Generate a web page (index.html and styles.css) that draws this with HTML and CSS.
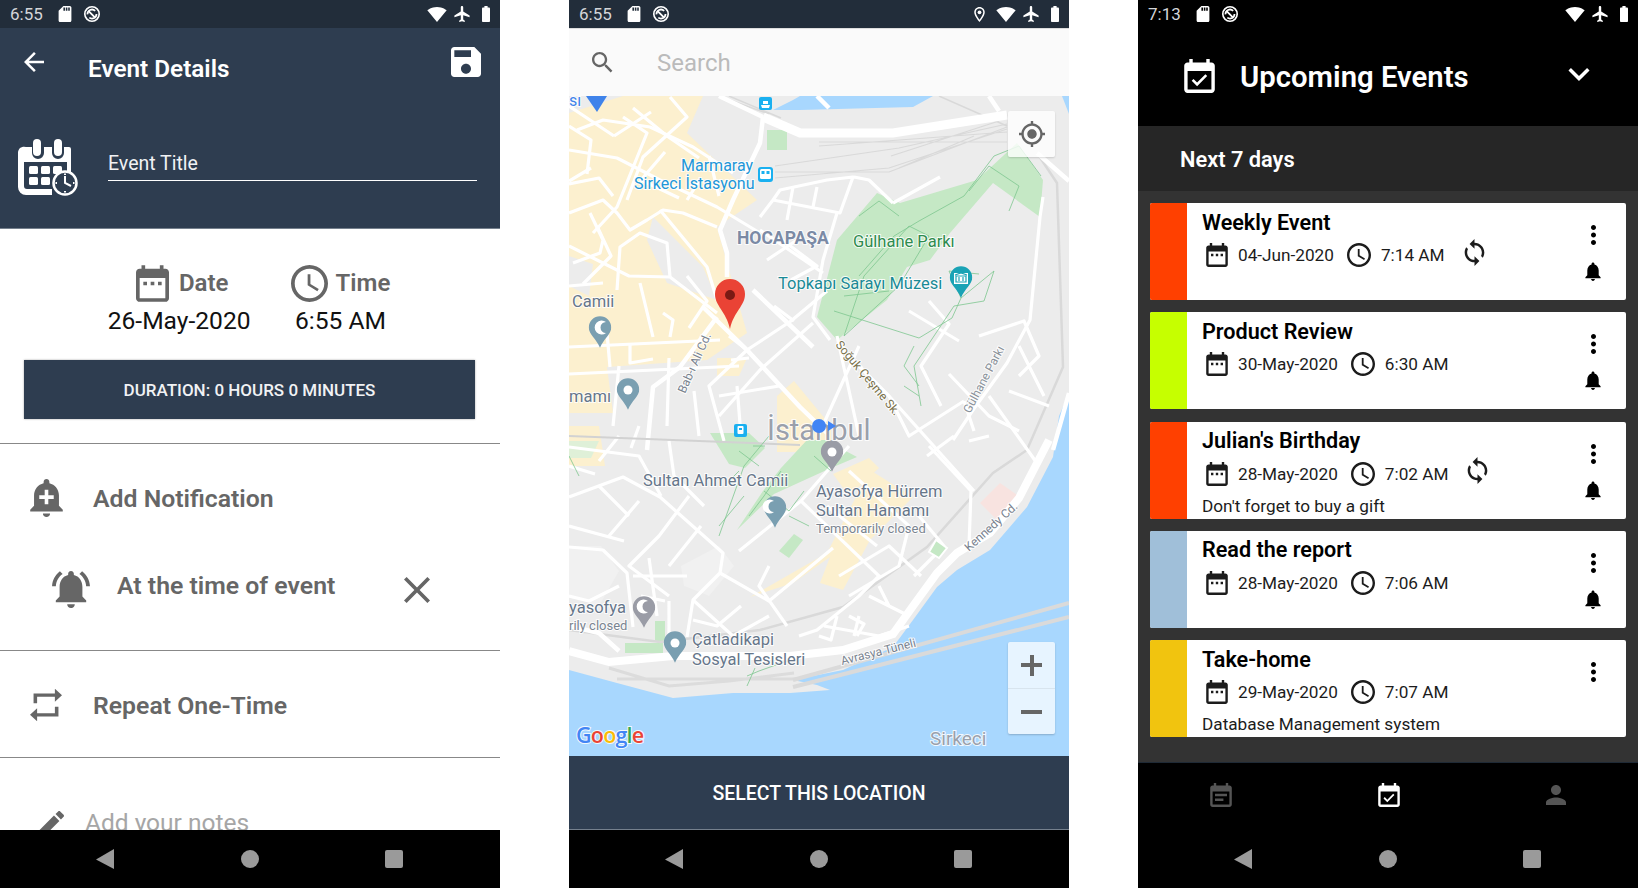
FILE: index.html
```html
<!DOCTYPE html>
<html lang="en">
<head>
    <meta charset="UTF-8">
    <title>Event app screens</title>
    <link rel="stylesheet" href="styles.css">
</head>
<body>

<svg class="sprite" width="0" height="0">
    <symbol id="i-back" viewBox="4 4 16 16"><path d="M20 11H7.83l5.59-5.59L12 4l-8 8 8 8 1.41-1.41L7.83 13H20v-2z"/></symbol>
    <symbol id="i-save" viewBox="3 3 18 18"><path d="M17 3H5c-1.11 0-2 .9-2 2v14c0 1.1.89 2 2 2h14c1.1 0 2-.9 2-2V7l-4-4zm-5 16c-1.66 0-3-1.34-3-3s1.34-3 3-3 3 1.34 3 3-1.34 3-3 3zm3-10H5V5h10v4z"/></symbol>
    <symbol id="i-date" viewBox="3 2 18 20"><path d="M9 11H7v2h2v-2zm4 0h-2v2h2v-2zm4 0h-2v2h2v-2zm2-7h-1V2h-2v2H8V2H6v2H5c-1.11 0-1.99.9-1.99 2L3 20c0 1.1.89 2 2 2h14c1.1 0 2-.9 2-2V6c0-1.1-.9-2-2-2zm0 16H5V9h14v11z"/></symbol>
    <symbol id="i-clock" viewBox="2 2 20 20"><path d="M11.99 2C6.47 2 2 6.48 2 12s4.47 10 9.99 10C17.52 22 22 17.52 22 12S17.52 2 11.99 2zM12 20c-4.42 0-8-3.58-8-8s3.58-8 8-8 8 3.58 8 8-3.58 8-8 8zm.5-13H11v6l5.25 3.15.75-1.23-4.5-2.67z"/></symbol>
    <symbol id="i-bell" viewBox="4 2 16 20"><path d="M12 22c1.1 0 2-.9 2-2h-4c0 1.1.89 2 2 2zm6-6v-5c0-3.07-1.64-5.64-4.5-6.32V4c0-.83-.67-1.5-1.5-1.5s-1.5.67-1.5 1.5v.68C7.63 5.36 6 7.92 6 11v5l-2 2v1h16v-1l-2-2z"/></symbol>
    <symbol id="i-add-alert" viewBox="3 2 18 21"><path d="M10.01 21.01c0 1.1.89 1.99 1.99 1.99s1.99-.89 1.99-1.99h-3.98zm8.87-4.19V11c0-3.25-2.25-5.97-5.29-6.69v-.72C13.59 2.71 12.88 2 12 2s-1.59.71-1.59 1.59v.72C7.37 5.03 5.12 7.75 5.12 11v5.82L3 18.94V20h18v-1.06l-2.12-2.12zM16 13.01h-3v3h-2v-3H8V11h3V8h2v3h3v2.01z"/></symbol>
    <symbol id="i-bell-active" viewBox="2 2 20 20"><path d="M7.58 4.08L6.15 2.65C3.75 4.48 2.17 7.3 2.03 10.5h2c.15-2.65 1.51-4.97 3.55-6.42zm12.39 6.42h2c-.15-3.2-1.73-6.02-4.12-7.85l-1.42 1.43c2.02 1.45 3.39 3.77 3.54 6.42zM18 11c0-3.07-1.64-5.64-4.5-6.32V4c0-.83-.67-1.5-1.5-1.5s-1.5.67-1.5 1.5v.68C7.63 5.36 6 7.92 6 11v5l-2 2v1h16v-1l-2-2v-5zm-6 11c.14 0 .27-.01.4-.04.65-.14 1.18-.58 1.44-1.18.1-.24.15-.5.15-.78h-4c.01 1.1.9 2 2.01 2z"/></symbol>
    <symbol id="i-close" viewBox="5 5 14 14"><path d="M19 6.41L17.59 5 12 10.59 6.41 5 5 6.41 10.59 12 5 17.59 6.41 19 12 13.41 17.59 19 19 17.59 13.41 12z"/></symbol>
    <symbol id="i-repeat" viewBox="3 1 18 22" preserveAspectRatio="none"><path d="M7 7h10v3l4-4-4-4v3H5v6h2V7zm10 10H7v-3l-4 4 4 4v-3h12v-6h-2v4z"/></symbol>
    <symbol id="i-edit" viewBox="3 3 18 18"><path d="M3 17.25V21h3.75L17.81 9.94l-3.75-3.75L3 17.25zM20.71 7.04c.39-.39.39-1.02 0-1.41l-2.34-2.34c-.39-.39-1.02-.39-1.41 0l-1.83 1.83 3.75 3.75 1.83-1.83z"/></symbol>
    <symbol id="i-search" viewBox="3 3 18 18"><path d="M15.5 14h-.79l-.28-.27C15.41 12.59 16 11.11 16 9.5 16 5.91 13.09 3 9.5 3S3 5.91 3 9.5 5.91 16 9.5 16c1.61 0 3.09-.59 4.23-1.57l.27.28v.79l5 4.99L20.49 19l-4.99-5zm-6 0C7.01 14 5 11.99 5 9.5S7.01 5 9.5 5 14 7.01 14 9.5 11.99 14 9.5 14z"/></symbol>
    <symbol id="i-event-check" viewBox="3 1 18 20"><path d="M16.53 11.06L15.47 10l-4.88 4.88-2.12-2.12-1.06 1.06L10.59 17l5.94-5.94zM19 3h-1V1h-2v2H8V1H6v2H5c-1.11 0-1.99.9-1.99 2L3 19c0 1.1.89 2 2 2h14c1.1 0 2-.9 2-2V5c0-1.1-.9-2-2-2zm0 16H5V8h14v11z"/></symbol>
    <symbol id="i-event-note" viewBox="3 1 18 20"><path d="M17 10H7v2h10v-2zm2-7h-1V1h-2v2H8V1H6v2H5c-1.11 0-1.99.9-1.99 2L3 19c0 1.1.89 2 2 2h14c1.1 0 2-.9 2-2V5c0-1.1-.9-2-2-2zm0 16H5V8h14v11zm-5-5H7v2h7v-2z"/></symbol>
    <symbol id="i-person" viewBox="4 4 16 16"><path d="M12 12c2.21 0 4-1.79 4-4s-1.79-4-4-4-4 1.79-4 4 1.79 4 4 4zm0 2c-2.67 0-8 1.34-8 4v2h16v-2c0-2.66-5.33-4-8-4z"/></symbol>
    <symbol id="i-chevron" viewBox="6 8.59 12 7.41"><path d="M16.59 8.59L12 13.17 7.41 8.59 6 10l6 6 6-6z"/></symbol>
    <symbol id="i-more" viewBox="10 4 4 16"><path d="M12 8c1.1 0 2-.9 2-2s-.9-2-2-2-2 .9-2 2 .9 2 2 2zm0 2c-1.1 0-2 .9-2 2s.9 2 2 2 2-.9 2-2-.9-2-2-2zm0 6c-1.1 0-2 .9-2 2s.9 2 2 2 2-.9 2-2-.9-2-2-2z"/></symbol>
    <symbol id="i-sync" viewBox="4 1 16 22"><path d="M12 4V1L8 5l4 4V6c3.31 0 6 2.69 6 6 0 1.01-.25 1.97-.7 2.8l1.46 1.46C19.54 15.03 20 13.57 20 12c0-4.42-3.58-8-8-8zm0 14c-3.31 0-6-2.69-6-6 0-1.01.25-1.97.7-2.8L5.24 7.74C4.46 8.97 4 10.43 4 12c0 4.42 3.58 8 8 8v3l4-4-4-4v3z"/></symbol>
    <symbol id="i-gps" viewBox="1 1 22 22"><path d="M12 8c-2.21 0-4 1.79-4 4s1.79 4 4 4 4-1.79 4-4-1.79-4-4-4zm8.94 3c-.46-4.17-3.77-7.48-7.94-7.94V1h-2v2.06C6.83 3.52 3.52 6.83 3.06 11H1v2h2.06c.46 4.17 3.77 7.48 7.94 7.94V23h2v-2.06c4.17-.46 7.48-3.77 7.94-7.94H23v-2h-2.06zM12 19c-3.87 0-7-3.13-7-7s3.13-7 7-7 7 3.13 7 7-3.13 7-7 7z"/></symbol>
    <symbol id="i-wifi" viewBox="0 3 24 18"><path d="M12 21L23.6 7C23.1 6.6 19.1 3 12 3S.9 6.6.4 7L12 21z"/></symbol>
    <symbol id="i-plane" viewBox="2 2 19 20"><path d="M21 16v-2l-8-5V3.5c0-.83-.67-1.5-1.5-1.5S10 2.67 10 3.5V9l-8 5v2l8-2.5V19l-2 1.5V22l3.5-1 3.5 1v-1.5L13 19v-5.5l8 2.5z"/></symbol>
    <symbol id="i-battery" viewBox="7 2 10 20"><path d="M15.67 4H14V2h-4v2H8.33C7.6 4 7 4.6 7 5.33v15.33C7 21.4 7.6 22 8.33 22h7.33c.74 0 1.34-.6 1.34-1.33V5.33C17 4.6 16.4 4 15.67 4z"/></symbol>
    <symbol id="i-sd" viewBox="4 2 16 20"><path d="M18 2h-8L4.02 8 4 20c0 1.1.9 2 2 2h12c1.1 0 2-.9 2-2V4c0-1.1-.9-2-2-2zm-6 6h-2V4h2v4zm3 0h-2V4h2v4zm3 0h-2V4h2v4z"/></symbol>
    <symbol id="i-sync-off" viewBox="0 0 20 20">
        <circle cx="10" cy="10" r="8" fill="none" stroke="currentColor" stroke-width="1.8"/>
        <path d="M5 10.5a5 5 0 0 1 8.5-4M15 10a5 5 0 0 1-8 4M6 6.5l8 8" fill="none" stroke="currentColor" stroke-width="2"/>
    </symbol>
    <symbol id="i-location" viewBox="5 2 14 20"><path d="M12 2C8.13 2 5 5.13 5 9c0 5.25 7 13 7 13s7-7.75 7-13c0-3.87-3.13-7-7-7zM7 9c0-2.76 2.24-5 5-5s5 2.24 5 5c0 2.88-2.88 7.19-5 9.88C9.92 16.21 7 11.85 7 9z"/><circle cx="12" cy="9" r="2.5"/></symbol>
    <symbol id="i-planner" viewBox="0 0 61 57">
        <path d="M8 8h6v6a6 6 0 0 0 12 0V8h8v6a6 6 0 0 0 12 0V8h5a2 2 0 0 1 2 2v25h-4V23H6v24a3 3 0 0 0 3 3h25v6H8a8 8 0 0 1-8-8V14a6 6 0 0 1 8-6z"/>
        <rect x="15" y="0" width="8" height="17" rx="4"/>
        <rect x="36" y="0" width="8" height="17" rx="4"/>
        <rect x="11" y="27" width="9" height="8" rx="1.5"/><rect x="23" y="27" width="9" height="8" rx="1.5"/><rect x="35" y="27" width="9" height="8" rx="1.5"/>
        <rect x="11" y="38" width="9" height="8" rx="1.5"/><rect x="23" y="38" width="9" height="8" rx="1.5"/>
        <circle cx="47" cy="44" r="11.5" fill="#2e3d50" stroke="currentColor" stroke-width="2.5"/>
        <path d="M47 37v7l6 3M47 34.5v1.5M47 52v1.5M37.5 44H39M55 44h1.5" fill="none" stroke="currentColor" stroke-width="2"/>
    </symbol>
    <symbol id="i-back-tri" viewBox="0 0 18 20"><path d="M18 0v20L0 10.5z"/></symbol>
    <symbol id="pin" viewBox="0 0 24 33"><path d="M12 0a11.7 11.7 0 0 1 11.7 11.7C23.7 19 16 23 12 33 8 23 .3 19 .3 11.7A11.7 11.7 0 0 1 12 0z"/></symbol>
</svg>

<div class="screens">

    <!-- pantalla 1: detalles del evento -->
    <section class="phone">
        <div class="status status-navy">
            <span class="clock-text">6:55</span>
            <svg class="st-sd"><use href="#i-sd"/></svg>
            <svg class="st-sync"><use href="#i-sync-off"/></svg>
            <span class="status-fill"></span>
            <svg class="st-wifi"><use href="#i-wifi"/></svg>
            <svg class="st-plane"><use href="#i-plane"/></svg>
            <svg class="st-batt"><use href="#i-battery"/></svg>
        </div>
        <header class="details-head">
            <div class="toolbar">
                <svg class="ic-back"><use href="#i-back"/></svg>
                <h1 class="toolbar-title">Event Details</h1>
                <svg class="ic-save"><use href="#i-save"/></svg>
            </div>
            <div class="title-row">
                <svg class="ic-planner"><use href="#i-planner"/></svg>
                <div class="title-input">Event Title</div>
            </div>
        </header>
        <div class="details-body">
            <div class="when">
                <div class="when-col when-date">
                    <div class="when-label"><svg class="ic-when"><use href="#i-date"/></svg>Date</div>
                    <div class="when-value">26-May-2020</div>
                </div>
                <div class="when-col">
                    <div class="when-label when-label-time"><svg class="ic-when-clock"><use href="#i-clock"/></svg>Time</div>
                    <div class="when-value">6:55 AM</div>
                </div>
            </div>
            <div class="duration">DURATION: 0 HOURS 0 MINUTES</div>
            <div class="row row-notif">
                <svg class="ic-row"><use href="#i-add-alert"/></svg>
                <span>Add Notification</span>
            </div>
            <div class="alert-row">
                <svg class="ic-alert"><use href="#i-bell-active"/></svg>
                <span class="alert-text">At the time of event</span>
                <svg class="ic-close"><use href="#i-close"/></svg>
            </div>
            <div class="row row-repeat">
                <svg class="ic-repeat"><use href="#i-repeat"/></svg>
                <span>Repeat One-Time</span>
            </div>
            <div class="notes">
                <svg class="ic-edit"><use href="#i-edit"/></svg>
                <span>Add your notes</span>
            </div>
        </div>
        <nav class="sysnav">
            <svg class="nav-tri"><use href="#i-back-tri"/></svg>
            <span class="nav-dot"></span>
            <span class="nav-square"></span>
        </nav>
    </section>

    <!-- pantalla 2: mapa -->
    <section class="phone">
        <div class="status status-dark">
            <span class="clock-text">6:55</span>
            <svg class="st-sd"><use href="#i-sd"/></svg>
            <svg class="st-sync"><use href="#i-sync-off"/></svg>
            <span class="status-fill"></span>
            <svg class="st-loc"><use href="#i-location"/></svg>
            <svg class="st-wifi"><use href="#i-wifi"/></svg>
            <svg class="st-plane"><use href="#i-plane"/></svg>
            <svg class="st-batt"><use href="#i-battery"/></svg>
        </div>
        <div class="searchbar">
            <svg class="ic-search"><use href="#i-search"/></svg>
            <span>Search</span>
        </div>
        <div class="map">
            <svg class="map-art" viewBox="0 0 500 660" width="500" height="660">
                <rect width="500" height="660" fill="#ececec"/>
                <!-- zonas amarillas -->
                <g fill="#fcf0cf">
                    <path d="M0 17L54 0H134L118 37L188 104L148 131L158 167L178 237L138 264L38 271L44 317L0 317z"/>
                    <path d="M0 330H30L36 370H0z"/>
                    <path d="M208 300L225 285L262 330L262 356H208z"/>
                    <path d="M148 262H178L170 280H148z"/>
                    <path d="M181 501L258 457L301 374L344 401L301 444L274 494L251 487L261 461L224 487z"/>
                    <path d="M264 378L300 362L310 372L280 400z"/>
                </g>
                <path d="M84 121L134 171L148 204L98 187L78 144z M0 160L24 168L20 200L0 190z" fill="#ececec"/>
                <!-- agua -->
                <g fill="#a8d7fe">
                    <path d="M0 574L48 587L104 602L164 597L221 597L261 594L248 589L224 584L274 574L324 551L344 524L368 491L388 474L421 454L458 411L484 361L490 320L500 297V660H0z"/>
                    <path d="M204 14L224 4L231 0H364L344 11L231 14z"/>
                    <path d="M493 0H500V18z"/>
                </g>
                <!-- parques -->
                <g fill="#c5e8c5">
                    <path d="M248 221L268 144L308 97L331 107L408 84L448 47L474 84L471 121L424 87L381 137L361 164L338 171L318 204L268 244z"/>
                    <path d="M198 34H218V54H198z"/>
                    <path d="M141 337H180L196 352L176 372L160 368z"/>
                    <path d="M168 434L205 398L262 372L288 361L256 344H238L212 372L194 395z"/>
                    <path d="M210 455L225 438L234 444L220 462z"/>
                    <path d="M56 547H94V557H56z"/>
                    <path d="M86 525H96V545H86z"/>
                    <path d="M0 345H30L22 362H0z" fill="#dff0d8"/>
                </g>
                <path d="M411 407L431 387L451 401L428 424z" fill="#f8e3e0"/>
                <path d="M0 450H32L50 475L30 510L0 500z M112 470L150 450L165 470L140 500L115 490z" fill="#f1f1f1"/>
                <!-- vias de tren -->
                <g fill="none" stroke="#d9d9d9">
                    <path d="M0 534L91 546L191 534L274 511L358 451L424 377L458 354L494 271L488 87L468 57" stroke-width="2.5"/>
                    <path d="M206 76H320L438 31M206 82L320 72L438 33M206 70L330 52L438 28M250 46H438M250 50L438 36M330 72L405 40M322 60L430 25" stroke-width="1.2"/>
                    <path d="M150 0L200 18M160 0L212 22M370 0L438 30" stroke-width="1.5"/>
                </g>
                <!-- calles -->
                <g fill="none" stroke="#fff" stroke-width="3.2" stroke-linejoin="round">
                    <path d="M0 54L48 62L91 84L148 111L191 137M8 34L34 24L81 31L124 51L164 77M54 21L78 37L48 111L24 137M101 1L118 21L74 61L58 104M0 117L34 104L48 117L61 134L78 124L94 114L114 117L148 131"/>
                    <path d="M91 114L138 171L148 204M48 194L51 151L71 137L98 147L101 181M4 167L31 157L34 144L21 117M71 187L84 241M94 217L104 224L101 241M38 237L41 271M61 247V267L84 263M0 88L30 82L44 100M0 30L22 44L18 78M64 12L98 40L130 62M96 56L72 84L110 102M132 82L118 104M28 130L42 160L14 188M118 180L138 205L120 232"/>
                    <path d="M191 121L204 104L271 117L284 81L258 84L211 94L204 104M224 91L218 124M248 91L244 111M268 117L254 164L244 221L261 244M191 134L254 177M208 140L248 170L222 184M198 164L228 144M324 107L371 81M285 81L300 84L324 107"/>
                    <path d="M0 150L60 180L101 181L148 217M0 190L34 187M0 251L151 244M0 278L170 270M50 270L44 330M100 262L98 330M162 264L180 262M168 290L172 340M125 295L130 340M150 300L210 290M178 254L222 225L258 195"/>
                    <path d="M244 227L191 274L150 320M160 240L178 254L140 290L155 345M205 210L225 225M290 250L250 338M268 240L290 340M270 250L320 300L405 395M320 300L340 340L395 305M395 305L405 335M340 215L390 245M450 250L475 300M440 295L480 310M420 300L470 370M410 240L455 225L470 260L450 280M360 205L380 228L352 270L372 310"/>
                    <path d="M474 101L471 121L461 224L438 267L404 314L384 344M380 278L420 320L450 335"/>
                    <path d="M0 401L54 381L91 401L154 457L151 477L124 504L118 541M0 351L70 360L92 400M30 365L50 340M100 345L105 380L135 410M70 405L40 440M120 400L90 440L60 470L100 500M0 430L55 445M30 390L60 420M132 430L100 470M0 370L26 378M62 352L70 330"/>
                    <path d="M0 451L34 454L58 477L64 531M0 500L20 505L50 490M100 505L100 545M124 504L164 540L200 520M151 477L200 505L264 452M200 470L190 490L218 530M170 455L232 405L280 350M64 480H118M80 462L88 520M72 500L96 505M124 524L148 530L172 510"/>
                    <path d="M232 405L310 480L290 500L248 534L230 540M258 410L308 450M280 375L340 430M340 430L330 470L280 500M270 480L320 450L352 480M320 510L310 490M290 520L285 540M340 530L310 540L255 530M300 500L340 520M345 480L375 450L350 420M360 350L402 395L400 450M358 360L385 340M400 345L420 340M250 540L262 544L268 520M280 520L295 528L288 540"/>
                    <path d="M0 10L45 40M45 40L82 16M0 85L22 72M140 60L150 100"/>
                </g>
                <g fill="none" stroke="#fff" stroke-width="4.5" stroke-linejoin="round">
                    <path d="M194 21L191 47L164 104L151 134L158 157L158 181M134 211L178 254L231 311L258 337M184 194L244 251M148 221L111 271L84 291L78 354"/>
                    <path d="M150 0L194 21M248 0L260 12M420 0L430 15"/>
                    <path d="M468 57L500 85M500 297L484 354"/>
                    <path d="M0 530L30 537L50 555"/>
                </g>
                <path d="M194 21L231 37L324 37L438 19" fill="none" stroke="#fff" stroke-width="9"/>
                <path d="M0 555L40 566L104 560L221 560L274 554L324 538L344 510L368 477L388 457L421 437L450 402L480 344" fill="none" stroke="#fff" stroke-width="8"/>
                <path d="M40 572L100 590L160 585L225 577M48 583L230 583" fill="none" stroke="#dcdcdc" stroke-width="3"/>
                <path d="M224 584L500 507M224 591L500 521" fill="none" stroke="#dadada" stroke-width="4"/>
                <path d="M0 340L231 349" fill="none" stroke="#d2d2d2" stroke-width="2"/>
                <!-- senderos -->
                <g fill="none" stroke="#7dc68f" stroke-width=".8">
                    <path d="M290 180L325 140L350 125L395 100L425 60L450 50L472 80M275 240L295 180L340 130L360 140L330 190L275 240M290 120L310 105L330 120M400 95L420 70L450 90L440 115M275 200L320 195"/>
                    <path d="M265 215L350 242L383 222L392 202L425 175L415 205L385 210L345 270L352 310M345 250L335 270L350 290M335 290L350 300M392 202L380 175L410 178"/>
                    <path d="M200 340L175 370L150 440M212 375L195 400L180 420M150 430L175 400M195 395L220 415L235 395M170 375L160 385M245 360L262 375M220 420L240 430M184 350H196M170 355L190 370"/>
                    <path d="M0 360L10 380M178 580L190 575L218 565M186 572L178 590"/>
                </g>

                <!-- pines -->
                <use href="#pin" x="19.5" y="220" width="23" height="32" fill="#7a9fb1"/>
                <use href="#pin" x="47.5" y="282" width="23" height="32" fill="#7a9fb1"/>
                <use href="#pin" x="251.5" y="344" width="23" height="32" fill="#9a9ca6"/>
                <use href="#pin" x="194.5" y="400" width="23" height="32" fill="#7a9fb1"/>
                <use href="#pin" x="63.5" y="500" width="23" height="32" fill="#9a9ca6"/>
                <use href="#pin" x="94.5" y="535" width="23" height="32" fill="#7a9fb1"/>
                <use href="#pin" x="380.5" y="170" width="23" height="32" fill="#1aa3b5"/>
                <path d="M17 0H38L28 16z" fill="#3f83ea"/>
                <g fill="#fff">
                    <circle cx="59" cy="294" r="4.5"/><circle cx="263" cy="356" r="4.5"/><circle cx="106" cy="547" r="4.5"/>
                    <path d="M38 227a7 7 0 1 0 0 11a5.5 5.5 0 1 1 0-11zM206 406a7 7 0 1 0 0 11a5.5 5.5 0 1 1 0-11z M80 506a7 7 0 1 0 0 11a5.5 5.5 0 1 1 0-11z" transform="translate(-1 -1)"/>
                    <path d="M385 177h14v11h-14z"/>
                </g>
                <path d="M387 180h10v6h-10zM390 181v4M394 181v4M386 179l6-2 6 2" fill="none" stroke="#1aa3b5" stroke-width="1.2"/>

                <!-- iconos de transporte -->
                <rect x="190" y="1" width="13" height="13" rx="2" fill="#1ab0f0"/>
                <path d="M192 9H201L200 12H193zM194 5H199V8H194z" fill="#fff"/>
                <rect x="189" y="71" width="15" height="15" rx="3" fill="#1ab0f0"/>
                <rect x="191" y="73" width="11" height="10" rx="1.5" fill="#fff"/>
                <path d="M192.5 75H195.5V78H192.5zM197.5 75H200.5V78H197.5z" fill="#1ab0f0"/>
                <rect x="165" y="328" width="13" height="13" rx="2" fill="#1ab0f0"/>
                <rect x="168.5" y="330" width="6" height="8" rx="1" fill="#fff"/>
                <path d="M170 332H173V334H170z" fill="#1ab0f0"/>
                <path d="M367 444L378 452L370 462L360 456z" fill="#c5e8c5" stroke="#fff" stroke-width="2"/>

                <!-- etiquetas -->
                <g class="map-labels">
                    <text x="0" y="10" fill="#3f83ea" class="lb16">sı</text>
                    <text x="112" y="75" fill="#2196d8" class="lb16">Marmaray</text>
                    <text x="65" y="93" fill="#2196d8" class="lb16">Sirkeci İstasyonu</text>
                    <text x="168" y="148" fill="#7b8aa5" class="lb-area">HOCAPAŞA</text>
                    <text x="284" y="151" fill="#2e8b4e" class="lb165">Gülhane Parkı</text>
                    <text x="209" y="193" fill="#1a8a96" class="lb165">Topkapı Sarayı Müzesi</text>
                    <text x="3" y="211" fill="#66768a" class="lb165">Camii</text>
                    <text x="0" y="306" fill="#66768a" class="lb165">mamı</text>
                    <text x="74" y="390" fill="#66768a" class="lb165">Sultan Ahmet Camii</text>
                    <text x="247" y="401" fill="#66768a" class="lb165">Ayasofya Hürrem</text>
                    <text x="247" y="420" fill="#66768a" class="lb165">Sultan Hamamı</text>
                    <text x="247" y="437" fill="#7a8490" class="lb13">Temporarily closed</text>
                    <text x="0" y="517" fill="#66768a" class="lb165">yasofya</text>
                    <text x="0" y="534" fill="#7a8490" class="lb13">rily closed</text>
                    <text x="123" y="549" fill="#66768a" class="lb165">Çatladikapi</text>
                    <text x="123" y="569" fill="#66768a" class="lb165">Sosyal Tesisleri</text>
                    <text x="0" y="0" transform="translate(273 569) rotate(-14)" fill="#78828e" class="lb12">Avrasya Tüneli</text>
                    <text x="0" y="0" transform="translate(400 456) rotate(-42)" fill="#78828e" class="lb12">Kennedy Cd.</text>
                    <text x="0" y="0" transform="translate(116 298) rotate(-66)" fill="#78828e" class="lb12">Bab-ı Ali Cd.</text>
                    <text x="0" y="0" transform="translate(266 249) rotate(50)" fill="#78704a" class="lb12">Soğuk Çeşme Sk.</text>
                    <text x="0" y="0" transform="translate(401 318) rotate(-62)" fill="#8a929a" class="lb12">Gülhane Parkı</text>
                    <text x="198" y="344" fill="#9aa0ab" class="lb-city">İstanbul</text>
                    <text x="361" y="649" fill="#9aa0ab" class="lb-sea">Sirkeci</text>
                    <text x="7" y="647" class="lb-google"><tspan fill="#4285f4">G</tspan><tspan fill="#ea4335">o</tspan><tspan fill="#fbbc05">o</tspan><tspan fill="#4285f4">g</tspan><tspan fill="#34a853">l</tspan><tspan fill="#ea4335">e</tspan></text>
                </g>

                <!-- mi ubicacion y marcador -->
                <circle cx="250" cy="330" r="7" fill="#4285f4"/>
                <path d="M259 325L267 330L259 335z" fill="#4285f4"/>
                <path d="M161 183a15 15 0 0 1 15 15C176 210 165 215 161 233C157 215 146 210 146 198a15 15 0 0 1 15-15z" fill="#ea4335"/>
                <circle cx="161" cy="199" r="5" fill="#7a1a14"/>
            </svg>
            <button class="map-btn map-locate"><svg class="ic-gps"><use href="#i-gps"/></svg></button>
            <div class="map-zoom">
                <span class="zoom-btn zoom-plus"></span>
                <span class="zoom-btn zoom-minus"></span>
            </div>
        </div>
        <div class="select-btn">SELECT THIS LOCATION</div>
        <nav class="sysnav">
            <svg class="nav-tri"><use href="#i-back-tri"/></svg>
            <span class="nav-dot"></span>
            <span class="nav-square"></span>
        </nav>
    </section>

    <!-- pantalla 3: proximos eventos -->
    <section class="phone phone-black">
        <div class="status status-black">
            <span class="clock-text">7:13</span>
            <svg class="st-sd"><use href="#i-sd"/></svg>
            <svg class="st-sync"><use href="#i-sync-off"/></svg>
            <span class="status-fill"></span>
            <svg class="st-wifi"><use href="#i-wifi"/></svg>
            <svg class="st-plane"><use href="#i-plane"/></svg>
            <svg class="st-batt"><use href="#i-battery"/></svg>
        </div>
        <header class="upcoming-head">
            <svg class="ic-upcoming"><use href="#i-event-check"/></svg>
            <h1 class="upcoming-title">Upcoming Events</h1>
            <svg class="ic-chevron"><use href="#i-chevron"/></svg>
        </header>
        <div class="range">Next 7 days</div>
        <div class="event-list">
            <article class="event">
                <div class="event-color c-red"></div>
                <div class="event-main">
                    <h2 class="event-title">Weekly Event</h2>
                    <div class="event-meta">
                        <svg class="ic-meta"><use href="#i-date"/></svg><span>04-Jun-2020</span>
                        <svg class="ic-meta ic-meta-clock"><use href="#i-clock"/></svg><span>7:14 AM</span>
                        <svg class="ic-sync"><use href="#i-sync"/></svg>
                    </div>
                </div>
                <div class="event-side">
                    <svg class="ic-more"><use href="#i-more"/></svg>
                    <svg class="ic-ebell"><use href="#i-bell"/></svg>
                </div>
            </article>
            <article class="event">
                <div class="event-color c-lime"></div>
                <div class="event-main">
                    <h2 class="event-title">Product Review</h2>
                    <div class="event-meta">
                        <svg class="ic-meta"><use href="#i-date"/></svg><span>30-May-2020</span>
                        <svg class="ic-meta ic-meta-clock"><use href="#i-clock"/></svg><span>6:30 AM</span>
                    </div>
                </div>
                <div class="event-side">
                    <svg class="ic-more"><use href="#i-more"/></svg>
                    <svg class="ic-ebell"><use href="#i-bell"/></svg>
                </div>
            </article>
            <article class="event">
                <div class="event-color c-red"></div>
                <div class="event-main">
                    <h2 class="event-title">Julian's Birthday</h2>
                    <div class="event-meta">
                        <svg class="ic-meta"><use href="#i-date"/></svg><span>28-May-2020</span>
                        <svg class="ic-meta ic-meta-clock"><use href="#i-clock"/></svg><span>7:02 AM</span>
                        <svg class="ic-sync"><use href="#i-sync"/></svg>
                    </div>
                    <p class="event-note">Don't forget to buy a gift</p>
                </div>
                <div class="event-side">
                    <svg class="ic-more"><use href="#i-more"/></svg>
                    <svg class="ic-ebell"><use href="#i-bell"/></svg>
                </div>
            </article>
            <article class="event">
                <div class="event-color c-blue"></div>
                <div class="event-main">
                    <h2 class="event-title">Read the report</h2>
                    <div class="event-meta">
                        <svg class="ic-meta"><use href="#i-date"/></svg><span>28-May-2020</span>
                        <svg class="ic-meta ic-meta-clock"><use href="#i-clock"/></svg><span>7:06 AM</span>
                    </div>
                </div>
                <div class="event-side">
                    <svg class="ic-more"><use href="#i-more"/></svg>
                    <svg class="ic-ebell"><use href="#i-bell"/></svg>
                </div>
            </article>
            <article class="event">
                <div class="event-color c-yellow"></div>
                <div class="event-main">
                    <h2 class="event-title">Take-home</h2>
                    <div class="event-meta">
                        <svg class="ic-meta"><use href="#i-date"/></svg><span>29-May-2020</span>
                        <svg class="ic-meta ic-meta-clock"><use href="#i-clock"/></svg><span>7:07 AM</span>
                    </div>
                    <p class="event-note">Database Management system</p>
                </div>
                <div class="event-side">
                    <svg class="ic-more"><use href="#i-more"/></svg>
                </div>
            </article>
        </div>
        <div class="tabs">
            <svg class="ic-tab ic-tab-off"><use href="#i-event-note"/></svg>
            <svg class="ic-tab"><use href="#i-event-check"/></svg>
            <svg class="ic-tab ic-tab-off ic-tab-person"><use href="#i-person"/></svg>
        </div>
        <nav class="sysnav">
            <svg class="nav-tri"><use href="#i-back-tri"/></svg>
            <span class="nav-dot"></span>
            <span class="nav-square"></span>
        </nav>
    </section>

</div>

</body>
</html>
```
FILE: styles.css
```css
/* Base */
body {
    margin: 0;
    background-color: #fff;
    font-family: Roboto, "Liberation Sans", sans-serif;
    overflow: hidden;
}
h1, h2, p {
    margin: 0;
    font-weight: 600;
}
svg {
    display: block;
    flex: none;
    fill: currentColor;
}
.sprite {
    position: absolute;
}
.screens {
    display: flex;
    justify-content: space-between;
    width: 1638px;
    height: 888px;
}
.phone {
    display: flex;
    flex-direction: column;
    width: 500px;
    height: 888px;
    overflow: hidden;
    background-color: #fff;
}

/* Barra de estado */
.status {
    display: flex;
    align-items: center;
    flex: none;
    height: 28px;
    padding: 0 9px 0 10px;
    color: #fff;
    box-sizing: border-box;
}
.status-navy, .status-dark {
    background-color: #222d3a;
}
.status-black {
    background-color: #000;
}
.clock-text {
    width: 48px;
    font-size: 17px;
    color: #d4d6d9;
}
.st-sd {
    width: 14px;
    height: 16px;
}
.st-sync {
    width: 18px;
    height: 18px;
    margin-left: 11px;
}
.status-fill {
    flex: 1;
}
.st-loc {
    width: 11px;
    height: 15px;
    margin-right: 11px;
}
.st-wifi {
    width: 20px;
    height: 15px;
}
.st-plane {
    width: 16px;
    height: 16px;
    margin-left: 7px;
}
.st-batt {
    width: 10px;
    height: 16px;
    margin-left: 11px;
}

/* Pantalla 1 */
.details-head {
    flex: none;
    height: 201px;
    box-sizing: border-box;
    background-color: #2e3d50;
    border-bottom: 1px solid #75808d;
    color: #fff;
}
.toolbar {
    display: flex;
    align-items: flex-start;
    height: 111px;
    padding: 19px 19px 0 24px;
    box-sizing: border-box;
}
.ic-back {
    width: 20px;
    height: 20px;
    margin-top: 5px;
}
.toolbar-title {
    flex: 1;
    margin: 8px 0 0 44px;
    font-size: 24.3px;
    line-height: 28px;
}
.ic-save {
    width: 30px;
    height: 30px;
}
.title-row {
    display: flex;
    align-items: flex-start;
    padding-left: 18px;
}
.ic-planner {
    width: 61px;
    height: 57px;
}
.title-input {
    width: 369px;
    margin: 10px 0 0 29px;
    padding: 2px 0 3px;
    font-size: 19.5px;
    line-height: 26px;
    color: #f1f2f4;
    border-bottom: 1.5px solid #fff;
}
.details-body {
    flex: 1;
    min-height: 0;
    overflow: hidden;
    color: #666;
}
.when {
    display: flex;
    justify-content: center;
    gap: 40px;
    padding: 35px 2px 0 0;
}
.when-col {
    display: flex;
    flex-direction: column;
    align-items: center;
}
.when-label {
    display: flex;
    align-items: center;
    gap: 10px;
    height: 38px;
    font-size: 24px;
    font-weight: 600;
}
.when-date .when-label {
    margin-left: 6px;
}
.when-label-time {
    gap: 8px;
}
.ic-when {
    width: 33px;
    height: 37px;
}
.ic-when-clock {
    width: 37px;
    height: 37px;
}
.when-value {
    margin-top: 1px;
    font-size: 24.6px;
    line-height: 36px;
    color: #111;
}
.duration {
    height: 59px;
    margin: 21px 25px 0 24px;
    background-color: #2e3d50;
    box-shadow: 0 0 2px rgba(0, 0, 0, .35);
    color: #f1f2f4;
    font-size: 17px;
    font-weight: 500;
    line-height: 60px;
    text-align: center;
}
.row {
    display: flex;
    align-items: center;
    padding-left: 30px;
    font-size: 24.8px;
    font-weight: 600;
    border-top: 1.5px solid #888;
}
.row-notif {
    height: 95.5px;
    margin-top: 24px;
    padding-top: 14px;
    box-sizing: border-box;
}
.row-repeat {
    height: 108px;
    padding-top: 3px;
    box-sizing: border-box;
    border-bottom: 1.5px solid #888;
}
.ic-row {
    width: 33px;
    height: 38px;
    margin-right: 30px;
}
.ic-repeat {
    width: 32px;
    height: 36px;
    margin-right: 31px;
}
.alert-row {
    display: flex;
    align-items: center;
    height: 111px;
    padding: 0 0 17px 52px;
    box-sizing: border-box;
    font-size: 24.8px;
    font-weight: 600;
}
.ic-alert {
    width: 38px;
    height: 38px;
    margin-top: 6px;
}
.alert-text {
    width: 287px;
    margin-left: 27px;
}
.ic-close {
    width: 26px;
    height: 26px;
    margin-top: 8px;
}
.notes {
    display: flex;
    align-items: flex-start;
    padding: 51px 0 0 38px;
    color: #a6a6a6;
    font-size: 24.5px;
}
.ic-edit {
    width: 26px;
    height: 26px;
    margin: 2px 21px 0 0;
    color: #666;
}
.notes span {
    line-height: 28px;
}

/* Barra de navegacion */
.sysnav {
    display: flex;
    align-items: center;
    flex: none;
    height: 58px;
    padding-left: 96px;
    background-color: #000;
    color: #9a9a9a;
}
.nav-tri {
    width: 18px;
    height: 20px;
}
.nav-dot {
    width: 18px;
    height: 18px;
    margin-left: 127px;
    border-radius: 50%;
    background-color: #9a9a9a;
}
.nav-square {
    width: 18px;
    height: 18px;
    margin-left: 126px;
    border-radius: 2px;
    background-color: #9a9a9a;
}

/* Pantalla 2 */
.searchbar {
    display: flex;
    align-items: center;
    flex: none;
    height: 68px;
    padding: 0 0 0 23px;
    background-color: #fafafa;
    color: #666;
    font-size: 24px;
    border-top: 1px solid #ddd;
    box-sizing: border-box;
}
.searchbar span {
    margin-left: 44px;
    color: #bbb;
}
.ic-search {
    width: 21px;
    height: 21px;
}
.map {
    position: relative;
    flex: none;
    height: 660px;
    overflow: hidden;
}
.map-art {
    fill: none;
}
.map-labels text {
    paint-order: stroke;
    stroke: rgba(255, 255, 255, .85);
    stroke-width: 2px;
}
.lb16 {
    font-size: 16px;
}
.lb165 {
    font-size: 16.5px;
}
.lb13 {
    font-size: 13px;
}
.lb12 {
    font-size: 12px;
}
.lb-area {
    font-size: 17.5px;
    font-weight: 700;
}
.lb-city {
    font-size: 29px;
}
.lb-sea {
    font-size: 19px;
}
.lb-google {
    font-family: "Open Sans", Roboto, sans-serif;
    font-size: 21.5px;
    font-weight: 600;
    letter-spacing: -.8px;
}
.map-btn {
    position: absolute;
    top: 15px;
    right: 14px;
    width: 47px;
    height: 46px;
    padding: 0;
    border: none;
    border-radius: 2px;
    background-color: rgba(255, 255, 255, .78);
    box-shadow: 0 1px 2px rgba(0, 0, 0, .15);
    color: #666;
}
.ic-gps {
    width: 26px;
    height: 26px;
    margin: 0 auto;
}
.map-zoom {
    position: absolute;
    right: 14px;
    bottom: 22px;
    display: flex;
    flex-direction: column;
    width: 47px;
    height: 92px;
    border-radius: 2px;
    background-color: rgba(255, 255, 255, .72);
    box-shadow: 0 1px 2px rgba(0, 0, 0, .2);
}
.zoom-btn {
    position: relative;
    flex: 1;
}
.zoom-btn::before, .zoom-plus::after {
    content: "";
    position: absolute;
    left: 13px;
    top: 21px;
    width: 21px;
    height: 4px;
    background-color: #666;
}
.zoom-plus::after {
    left: 21.5px;
    top: 13px;
    width: 4px;
    height: 21px;
}
.zoom-plus {
    border-bottom: 1px solid #d8e4ee;
}
.select-btn {
    flex: none;
    height: 74px;
    box-sizing: border-box;
    background-color: #2e3d50;
    border-bottom: 1px solid #75808d;
    color: #fff;
    font-size: 19.5px;
    font-weight: 500;
    line-height: 75px;
    text-align: center;
}

/* Pantalla 3 */
.phone-black {
    background-color: #000;
}
.upcoming-head {
    display: flex;
    align-items: center;
    flex: none;
    height: 98px;
    padding: 0 48px 0 46px;
    box-sizing: border-box;
    color: #fff;
}
.ic-upcoming {
    width: 31px;
    height: 34px;
    margin-bottom: 2px;
}
.upcoming-title {
    flex: 1;
    margin-left: 25px;
    font-size: 29.3px;
}
.ic-chevron {
    width: 22px;
    height: 13px;
    margin-bottom: 6px;
}
.range {
    flex: none;
    height: 65px;
    padding-left: 42px;
    background-color: #262626;
    color: #fff;
    font-size: 21.8px;
    font-weight: 600;
    line-height: 68px;
}
.event-list {
    display: flex;
    flex-direction: column;
    gap: 12.3px;
    flex: none;
    height: 572px;
    padding: 12px 12px 0;
    box-sizing: border-box;
    background-color: #333;
    border-bottom: 1px solid #1f2a36;
}
.event {
    display: flex;
    flex: none;
    height: 97px;
    border-radius: 2px;
    overflow: hidden;
    background-color: #fff;
    color: #000;
}
.event-color {
    flex: none;
    width: 37px;
}
.c-red {
    background-color: #ff4000;
}
.c-lime {
    background-color: #c6ff00;
}
.c-blue {
    background-color: #a0bfd9;
}
.c-yellow {
    background-color: #f1c40f;
}
.event-main {
    flex: 1;
    padding: 5.5px 0 0 15px;
}
.event-title {
    font-size: 21.6px;
    line-height: 27px;
}
.event-meta {
    display: flex;
    align-items: center;
    height: 24px;
    margin-top: 7.5px;
    padding-left: 4px;
    font-size: 17.2px;
    color: #1c1c1c;
}
.event-meta span {
    margin-left: 10px;
}
.ic-meta {
    width: 22px;
    height: 24px;
}
.ic-meta-clock {
    width: 24px;
    height: 24px;
    margin-left: 13px;
}
.ic-sync {
    width: 21px;
    height: 27px;
    margin: -6px 0 0 19px;
}
.event-note {
    margin-top: 9px;
    font-size: 17.2px;
    font-weight: 400;
    line-height: 22px;
    color: #1c1c1c;
}
.event-side {
    display: flex;
    flex-direction: column;
    align-items: center;
    flex: none;
    width: 66px;
    padding-top: 22px;
}
.ic-more {
    width: 5px;
    height: 20px;
}
.ic-ebell {
    width: 16px;
    height: 19px;
    margin-top: 17px;
}
.tabs {
    display: flex;
    align-items: center;
    justify-content: space-between;
    flex: 1;
    padding: 0 72px 4px;
    color: #fff;
}
.ic-tab {
    width: 22px;
    height: 24px;
}
.ic-tab-off {
    color: #555;
}
.ic-tab-person {
    width: 20px;
    height: 20px;
}
```
